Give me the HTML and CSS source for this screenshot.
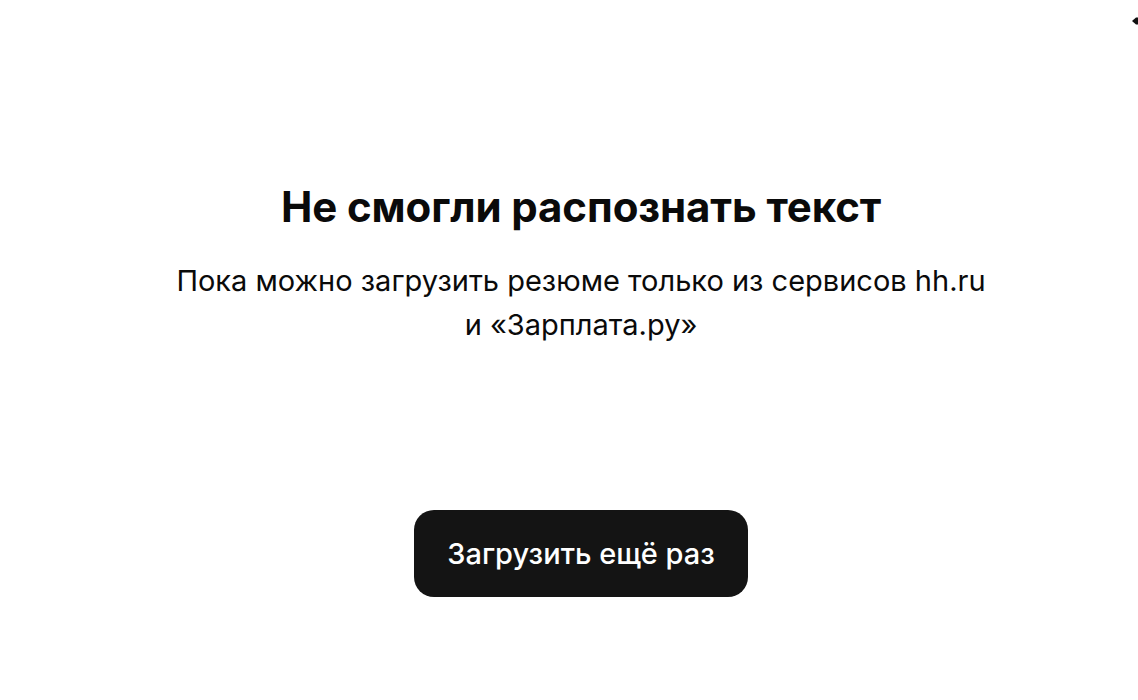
FILE: index.html
```html
<!DOCTYPE html>
<html lang="ru">
<head>
<meta charset="utf-8">
<title>Не смогли распознать текст</title>
<link rel="stylesheet" href="styles.css">
</head>
<body>
<div class="page">
  <span class="edge-mark" aria-hidden="true">
    <svg width="6" height="8" viewBox="0 0 6 8"><path d="M0 4 L4 0.5 L6 0.5 L6 7.5 L4 7.5 Z" fill="#111"/></svg>
  </span>
  <main class="content">
    <h1 class="title">Не смогли распознать текст</h1>
    <p class="subtitle">Пока можно загрузить резюме только из сервисов hh.ru<br>и «Зарплата.ру»</p>
    <button class="retry" type="button">Загрузить ещё раз</button>
  </main>
</div>
</body>
</html>
```

FILE: styles.css
```css
* { box-sizing: border-box; }
html, body {
  margin: 0;
  padding: 0;
  background: #ffffff;
}
body {
  font-family: Inter, "Noto Sans", "Liberation Sans", sans-serif;
  color: #000;
}
.page {
  position: relative;
  width: 1138px;
  height: 700px;
  overflow: hidden;
}
.edge-mark {
  position: absolute;
  top: 17px;
  right: 0;
  width: 6px;
  height: 8px;
  display: block;
}
.edge-mark svg { display: block; }
.content {
  display: flex;
  flex-direction: column;
  align-items: center;
  padding-top: 182px;
  padding-left: 24px;
}
.title {
  margin: 0;
  font-size: 42px;
  line-height: 50px;
  font-weight: 700;
  letter-spacing: -0.1px;
  color: #0a0a0a;
}
.subtitle {
  margin: 27px 0 0;
  font-size: 29px;
  line-height: 44px;
  font-weight: 400;
  text-align: center;
  color: #0a0a0a;
}
.retry {
  margin-top: 163px;
  width: 334px;
  height: 87px;
  border: none;
  border-radius: 20px;
  background: #141414;
  color: #ffffff;
  font-family: inherit;
  font-size: 29px;
  font-weight: 500;
  cursor: pointer;
}
```
